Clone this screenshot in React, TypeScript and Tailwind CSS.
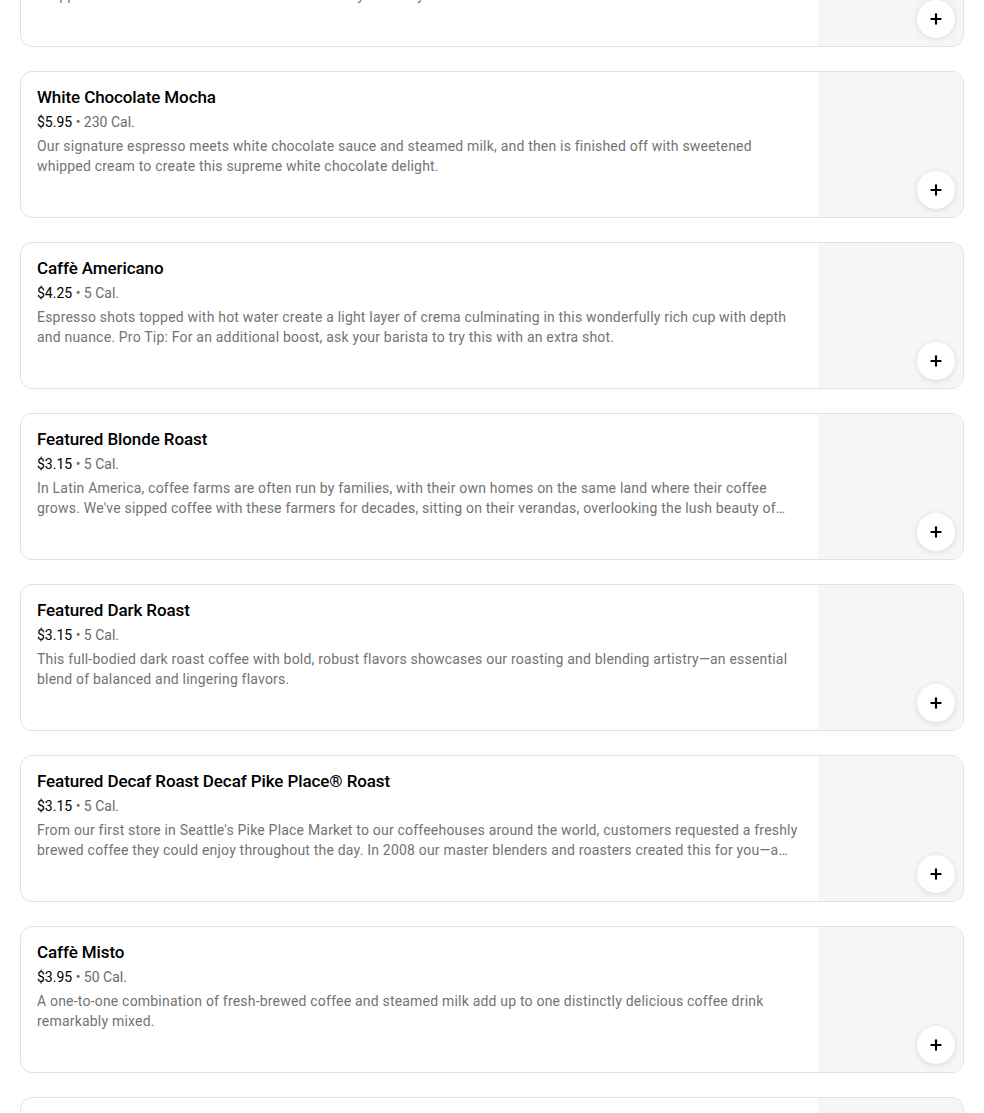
import { Plus } from 'lucide-react';

type Item = {
  name: string;
  price: string;
  cal: string;
  desc: string;
};

const items: Item[] = [
  {
    name: 'Caffè Mocha',
    price: '$5.45',
    cal: '370 Cal.',
    desc: 'Our rich, full-bodied espresso combined with bittersweet mocha sauce and steamed milk, then topped with sweetened whipped cream. The classic coffee drink that always sweetly satisfies.',
  },
  {
    name: 'White Chocolate Mocha',
    price: '$5.95',
    cal: '230 Cal.',
    desc: 'Our signature espresso meets white chocolate sauce and steamed milk, and then is finished off with sweetened whipped cream to create this supreme white chocolate delight.',
  },
  {
    name: 'Caffè Americano',
    price: '$4.25',
    cal: '5 Cal.',
    desc: 'Espresso shots topped with hot water create a light layer of crema culminating in this wonderfully rich cup with depth and nuance. Pro Tip: For an additional boost, ask your barista to try this with an extra shot.',
  },
  {
    name: 'Featured Blonde Roast',
    price: '$3.15',
    cal: '5 Cal.',
    desc: "In Latin America, coffee farms are often run by families, with their own homes on the same land where their coffee grows. We've sipped coffee with these farmers for decades, sitting on their verandas, overlooking the lush beauty of their farms.",
  },
  {
    name: 'Featured Dark Roast',
    price: '$3.15',
    cal: '5 Cal.',
    desc: 'This full-bodied dark roast coffee with bold, robust flavors showcases our roasting and blending artistry—an essential blend of balanced and lingering flavors.',
  },
  {
    name: 'Featured Decaf Roast Decaf Pike Place® Roast',
    price: '$3.15',
    cal: '5 Cal.',
    desc: "From our first store in Seattle's Pike Place Market to our coffeehouses around the world, customers requested a freshly brewed coffee they could enjoy throughout the day. In 2008 our master blenders and roasters created this for you—a smooth, well-rounded blend.",
  },
  {
    name: 'Caffè Misto',
    price: '$3.95',
    cal: '50 Cal.',
    desc: 'A one-to-one combination of fresh-brewed coffee and steamed milk add up to one distinctly delicious coffee drink remarkably mixed.',
  },
  {
    name: 'Cappuccino',
    price: '$4.95',
    cal: '140 Cal.',
    desc: 'Dark, rich espresso lies in wait under a smoothed and stretched layer of thick milk foam.',
  },
];

function MenuCard({ item }: { item: Item }) {
  return (
    <div className="flex h-[147px] overflow-hidden rounded-xl border border-[#e2e2e2] bg-white">
      <div className="min-w-0 flex-1 px-4 pt-[13px]">
        <div className="text-[17px] font-medium leading-6 tracking-[-0.1px] text-black">{item.name}</div>
        <div className="mt-[3px] text-sm leading-5">
          <span className="text-black">{item.price}</span>
          <span className="text-[#6b6b6b]"> • {item.cal}</span>
        </div>
        <p className="mt-1 line-clamp-2 text-sm leading-5 tracking-[0.2px] text-[#737373]">{item.desc}</p>
      </div>
      <div className="relative w-[145px] shrink-0 bg-[#f6f6f6]">
        <button className="absolute bottom-2 right-2 flex h-[38px] w-[38px] items-center justify-center rounded-full bg-white shadow-[0_1px_6px_rgba(0,0,0,0.12)]">
          <Plus className="h-4 w-4 text-black" strokeWidth={3.2} />
        </button>
      </div>
    </div>
  );
}

export default function App() {
  return (
    <div className="h-[1113px] overflow-hidden bg-white" style={{ fontFamily: 'Roboto, "Noto Sans", sans-serif' }}>
      <div className="mt-[-100px] flex flex-col gap-6 px-5">
        {items.map((item) => (
          <MenuCard key={item.name} item={item} />
        ))}
      </div>
    </div>
  );
}
